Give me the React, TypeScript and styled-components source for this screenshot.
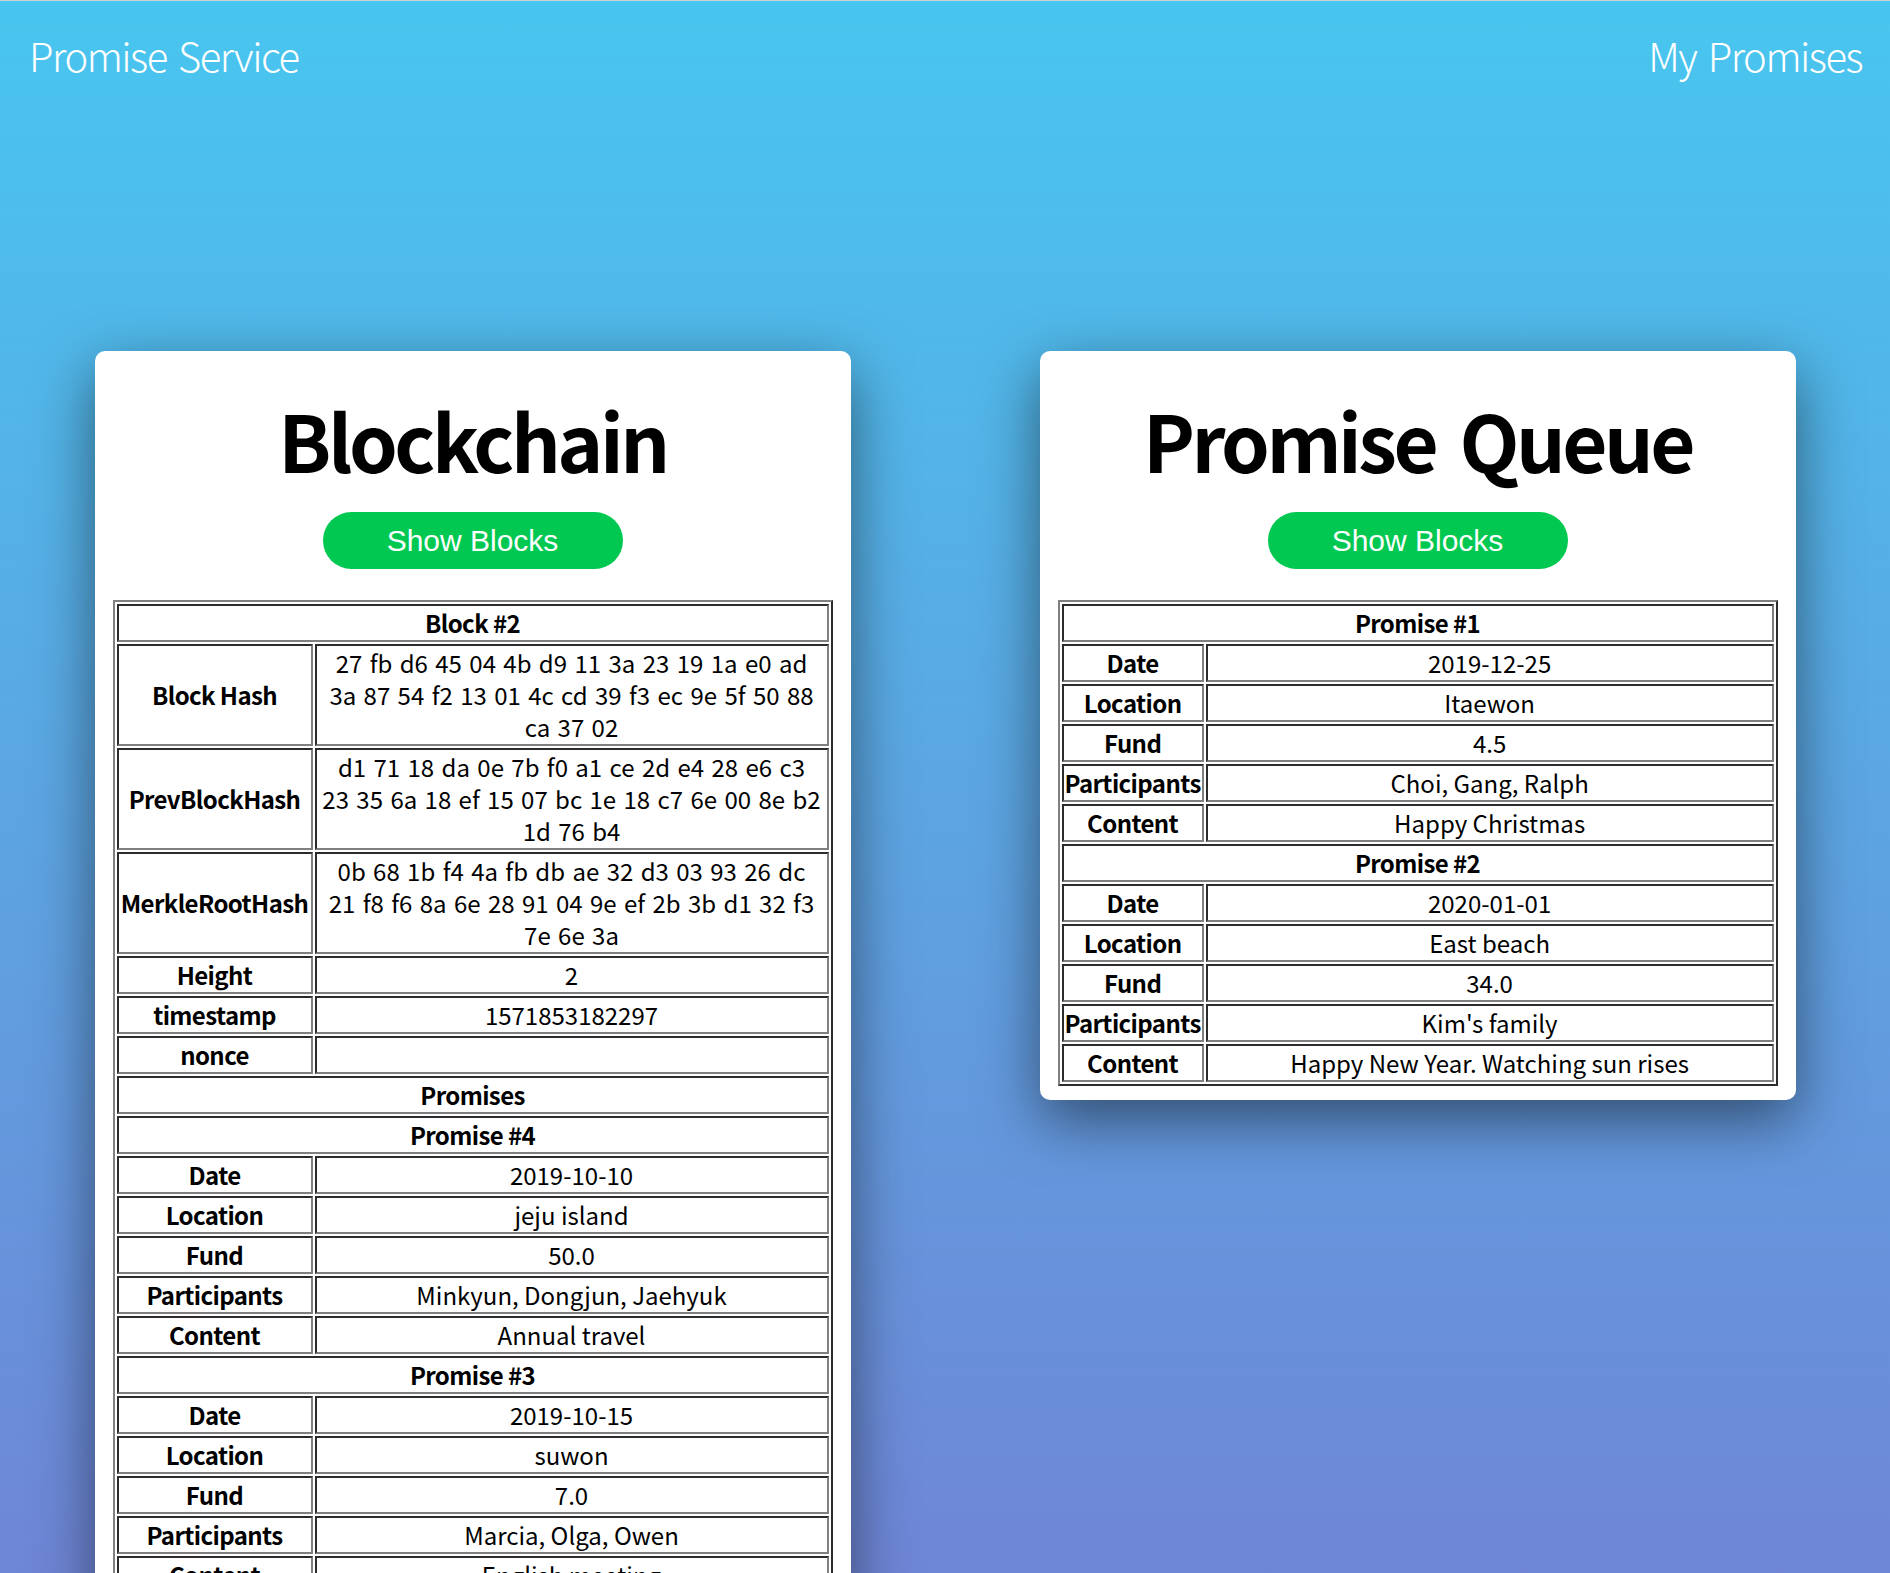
import React from "react";
import styled, { createGlobalStyle } from "styled-components";

const GlobalStyle = createGlobalStyle`
  html, body {
    margin: 0;
    padding: 0;
  }
  body {
    font-family: "Noto Sans CJK KR", "Noto Sans", sans-serif;
    color: #000;
  }
`;

type Promise = {
  id: number;
  date: string;
  location: string;
  fund: string;
  participants: string;
  content: string;
};

const blockPromises: Promise[] = [
  {
    id: 4,
    date: "2019-10-10",
    location: "jeju island",
    fund: "50.0",
    participants: "Minkyun, Dongjun, Jaehyuk",
    content: "Annual travel",
  },
  {
    id: 3,
    date: "2019-10-15",
    location: "suwon",
    fund: "7.0",
    participants: "Marcia, Olga, Owen",
    content: "English meeting",
  },
];

const queue: Promise[] = [
  {
    id: 1,
    date: "2019-12-25",
    location: "Itaewon",
    fund: "4.5",
    participants: "Choi, Gang, Ralph",
    content: "Happy Christmas",
  },
  {
    id: 2,
    date: "2020-01-01",
    location: "East beach",
    fund: "34.0",
    participants: "Kim's family",
    content: "Happy New Year. Watching sun rises",
  },
];

const block = {
  height: 2,
  timestamp: "1571853182297",
  hash: [
    "27 fb d6 45 04 4b d9 11 3a 23 19 1a e0 ad",
    "3a 87 54 f2 13 01 4c cd 39 f3 ec 9e 5f 50 88",
    "ca 37 02",
  ],
  prevHash: [
    "d1 71 18 da 0e 7b f0 a1 ce 2d e4 28 e6 c3",
    "23 35 6a 18 ef 15 07 bc 1e 18 c7 6e 00 8e b2",
    "1d 76 b4",
  ],
  merkleRoot: [
    "0b 68 1b f4 4a fb db ae 32 d3 03 93 26 dc",
    "21 f8 f6 8a 6e 28 91 04 9e ef 2b 3b d1 32 f3",
    "7e 6e 3a",
  ],
};

const PromiseRows = ({ p }: { p: Promise }) => (
  <>
    <tr>
      <Label colSpan={2}>Promise #{p.id}</Label>
    </tr>
    <tr>
      <Label>Date</Label>
      <Value>{p.date}</Value>
    </tr>
    <tr>
      <Label>Location</Label>
      <Value>{p.location}</Value>
    </tr>
    <tr>
      <Label>Fund</Label>
      <Value>{p.fund}</Value>
    </tr>
    <tr>
      <Label>Participants</Label>
      <Value>{p.participants}</Value>
    </tr>
    <tr>
      <Label>Content</Label>
      <Value>{p.content}</Value>
    </tr>
  </>
);

const HashValue = ({ lines }: { lines: string[] }) => (
  <Value>
    {lines.map((l, i) => (
      <HashLine key={i}>{l}</HashLine>
    ))}
  </Value>
);

const App = () => {
  return (
    <Page>
      <GlobalStyle />
      <Header>
        <NavLink href="#">Promise Service</NavLink>
        <NavLink href="#">My Promises</NavLink>
      </Header>
      <Board>
        <Card>
          <Title>Blockchain</Title>
          <ShowButton>Show Blocks</ShowButton>
          <Table $labelWidth={190}>
            <tbody>
              <tr>
                <Label colSpan={2}>Block #{block.height}</Label>
              </tr>
              <tr>
                <Label>Block Hash</Label>
                <HashValue lines={block.hash} />
              </tr>
              <tr>
                <Label>PrevBlockHash</Label>
                <HashValue lines={block.prevHash} />
              </tr>
              <tr>
                <Label>MerkleRootHash</Label>
                <HashValue lines={block.merkleRoot} />
              </tr>
              <tr>
                <Label>Height</Label>
                <Value>{block.height}</Value>
              </tr>
              <tr>
                <Label>timestamp</Label>
                <Value>{block.timestamp}</Value>
              </tr>
              <tr>
                <Label>nonce</Label>
                <Value></Value>
              </tr>
              <tr>
                <Label colSpan={2}>Promises</Label>
              </tr>
              {blockPromises.map((p) => (
                <PromiseRows key={p.id} p={p} />
              ))}
            </tbody>
          </Table>
        </Card>
        <Card>
          <Title>Promise Queue</Title>
          <ShowButton>Show Blocks</ShowButton>
          <Table $labelWidth={135}>
            <tbody>
              {queue.map((p) => (
                <PromiseRows key={p.id} p={p} />
              ))}
            </tbody>
          </Table>
        </Card>
      </Board>
    </Page>
  );
};

export default App;

const Page = styled.div`
  min-height: 100vh;
  border-top: 1px solid #cdd2d6;
  background: linear-gradient(to bottom, #48c6ef 0%, #6f86d6 100%);
  background-attachment: fixed;
  padding-bottom: 60px;
`;

const Header = styled.header`
  display: flex;
  justify-content: space-between;
  align-items: center;
  padding: 30px 28px 0 29px;
`;

const NavLink = styled.a`
  color: #fff;
  font-size: 40px;
  font-weight: 300;
  letter-spacing: -1.5px;
  word-spacing: 4px;
  line-height: 48px;
  text-decoration: none;
`;

const Board = styled.main`
  display: flex;
  justify-content: space-around;
  align-items: flex-start;
  padding-top: 272px;
`;

const Card = styled.section`
  width: 40%;
  box-sizing: border-box;
  background: #fff;
  border-radius: 10px;
  padding: 18px 18px 14px;
  box-shadow: 0 20px 60px rgba(0, 0, 0, 0.5);
  display: flex;
  flex-direction: column;
  align-items: center;
`;

const Title = styled.h1`
  margin: 22px 0 25px;
  font-size: 78px;
  line-height: 96px;
  font-weight: 700;
  letter-spacing: -3.5px;
  word-spacing: 10px;
`;

const ShowButton = styled.button`
  width: 300px;
  height: 57px;
  border: none;
  border-radius: 29px;
  background: #00c851;
  color: #fff;
  font-family: "Liberation Sans", Arial, sans-serif;
  font-size: 30px;
  margin-bottom: 31px;
  cursor: pointer;
`;

const Table = styled.table<{ $labelWidth: number }>`
  width: 100%;
  border: 2px outset grey;
  border-spacing: 2px;
  font-size: 24px;
  line-height: 32px;

  th:not([colspan]) {
    width: ${(p) => p.$labelWidth}px;
  }
`;

const Label = styled.th`
  border: 2px inset grey;
  padding: 1px;
  font-weight: 700;
  letter-spacing: -0.6px;
  text-align: center;
  white-space: nowrap;
`;

const Value = styled.td`
  border: 2px inset grey;
  padding: 1px;
  text-align: center;
`;

const HashLine = styled.span`
  display: block;
  white-space: nowrap;
  word-spacing: 2px;
`;
